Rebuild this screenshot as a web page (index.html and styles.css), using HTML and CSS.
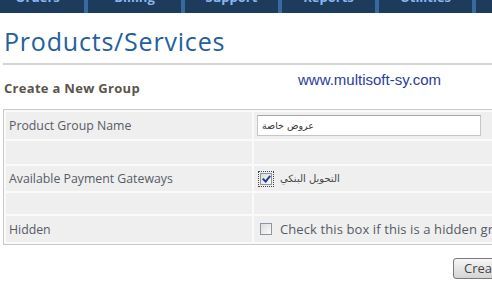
FILE: index.html
```html
<!DOCTYPE html>
<html lang="en">
<head>
<meta charset="UTF-8">
<meta name="viewport" content="width=device-width, initial-scale=1.0">
<title>Products/Services</title>
<link rel="stylesheet" href="styles.css">
</head>
<body>
<ul class="topnav">
  <li>Orders</li>
  <li>Billing</li>
  <li>Support</li>
  <li>Reports</li>
  <li>Utilities</li>
  <li>Addons</li>
</ul>
<div class="content">
  <h1>Products/Services</h1>
  <h2>Create a New Group</h2>
  <div class="watermark">www.multisoft-sy.com</div>
  <form>
    <table class="form">
      <tr class="row-name">
        <td class="fieldlabel">Product Group Name</td>
        <td class="fieldarea"><input type="text" class="text-input" value="عروض خاصة"></td>
      </tr>
      <tr class="row-spacer">
        <td class="fieldlabel"></td>
        <td class="fieldarea"></td>
      </tr>
      <tr class="row-gateways">
        <td class="fieldlabel">Available Payment Gateways</td>
        <td class="fieldarea">
          <label class="check focused"><input type="checkbox" checked><span class="ar">التحويل البنكي</span></label>
        </td>
      </tr>
      <tr class="row-spacer2">
        <td class="fieldlabel"></td>
        <td class="fieldarea"></td>
      </tr>
      <tr class="row-hidden">
        <td class="fieldlabel">Hidden</td>
        <td class="fieldarea">
          <label class="check big"><input type="checkbox"><span>Check this box if this is a hidden group</span></label>
        </td>
      </tr>
    </table>
    <div class="actions">
      <button type="button" class="button">Create Group</button>
    </div>
  </form>
</div>
</body>
</html>
```

FILE: styles.css
```css
html,
body {
  margin: 0;
  padding: 0;
  overflow: hidden;
  background: #fff;
}

body {
  position: relative;
  font-family: "Open Sans", Arial, sans-serif;
  color: #555;
}

/* top menu, scrolled so only its bottom shows */
.topnav {
  display: flex;
  margin: -17px 0 0 -9px;
  padding: 0;
  height: 30px;
  background: #1d3b5c;
  list-style: none;
}

.topnav li {
  flex: 0 0 93px;
  padding-top: 6px;
  line-height: 16px;
  text-align: center;
  font-size: 13px;
  font-weight: bold;
  color: #8db6ea;
  border-right: 4px solid #3a69a0;
}

.content {
  padding: 0 0 0 3px;
}

h1 {
  margin: 11px 0 0 0;
  padding: 0 0 5px 1px;
  font-size: 25px;
  font-weight: normal;
  letter-spacing: 0.8px;
  color: #22609e;
  border-bottom: 2px solid #d4d4d4;
}

h2 {
  margin: 14px 0 0 1px;
  font-size: 13px;
  font-weight: bold;
  letter-spacing: 0.3px;
  color: #5a554c;
}

.watermark {
  position: absolute;
  left: 298px;
  top: 71px;
  font-family: "Liberation Sans", Arial, sans-serif;
  font-size: 15px;
  color: #2a3c9e;
}

.form {
  margin-top: 12px;
  width: 760px;
  border: 1px solid #c9c9c9;
  border-spacing: 2px;
  background: #fafafa;
}

.form td {
  padding: 0 3px;
  background: #efefef;
  vertical-align: middle;
  font-size: 12.3px;
  white-space: nowrap;
}

.form td.fieldlabel {
  width: 240px;
  color: #575b66;
}

.row-name td { height: 27px; }
.row-spacer td { height: 23px; }
.row-gateways td { height: 25px; }
.row-spacer2 td { height: 21px; }
.row-hidden td { height: 26px; }

.text-input {
  display: block;
  box-sizing: border-box;
  width: 224px;
  height: 21px;
  margin: 0;
  padding: 0 4px;
  border: 1px solid #c6c6c6;
  border-top-color: #a9a9a9;
  background: #fff;
  font-family: "DejaVu Sans", sans-serif;
  font-size: 9.5px;
  color: #333;
}

.check {
  display: flex;
  align-items: center;
  gap: 8px;
}

.check input {
  appearance: none;
  -webkit-appearance: none;
  position: relative;
  box-sizing: border-box;
  width: 12px;
  height: 12px;
  margin: 0 0 0 3px;
  border: 1px solid #8a96a8;
  background: linear-gradient(135deg, #dcdcd8, #fbfbfb);
}

.check input:checked::after {
  content: "";
  position: absolute;
  left: 3px;
  top: 0px;
  width: 3px;
  height: 6px;
  border: solid #21409a;
  border-width: 0 2px 2px 0;
  transform: rotate(40deg);
}

.check.focused input {
  outline: 1px dotted #444;
  outline-offset: 1px;
}

.check .ar {
  font-family: "DejaVu Sans", sans-serif;
  font-size: 10px;
  color: #444;
}

.check.big span {
  font-size: 13px;
  letter-spacing: 0.1px;
  color: #555b66;
}

.actions {
  padding: 11px 0 0 450px;
  white-space: nowrap;
}

.button {
  height: 21px;
  padding: 0 10px;
  border: 1px solid #7a7a7a;
  border-radius: 3px;
  background: linear-gradient(#f6f6f6, #d4d4d4);
  font-family: "Open Sans", Arial, sans-serif;
  font-size: 13px;
  color: #444;
  white-space: nowrap;
}
```
